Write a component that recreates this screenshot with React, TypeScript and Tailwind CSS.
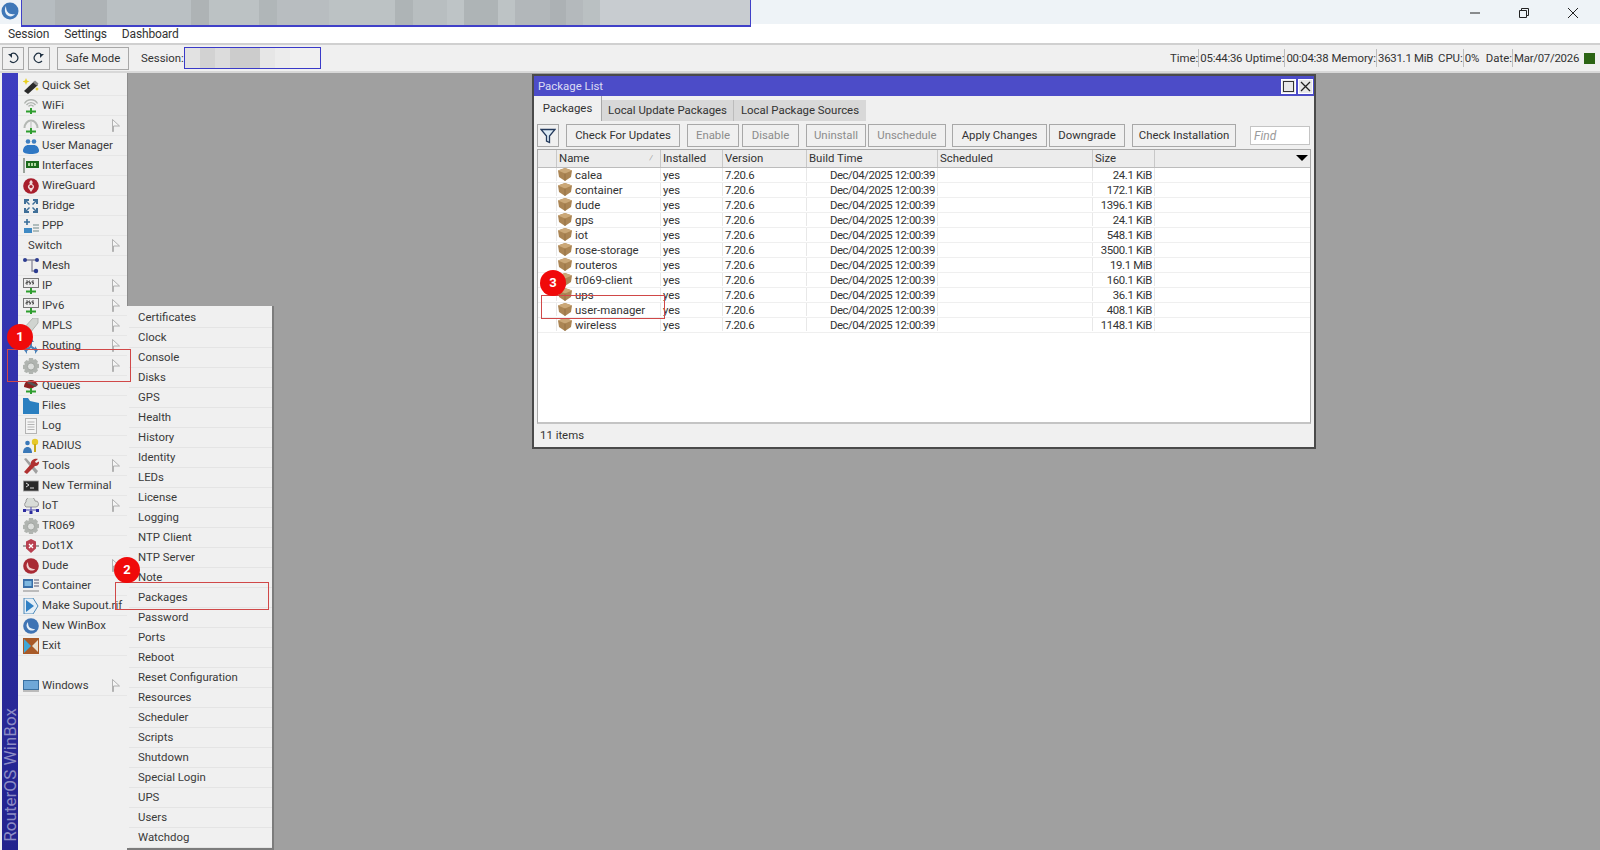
import React from 'react';

const Green = () => <path d="M8 10v6M3 13.500h10" stroke="#2e9e2e" strokeWidth="2" fill="none" />;

const icons: Record<string, React.ReactNode> = {
  quick: (
    <>
      <path d="M1 13L11 3.500 15 7 5 16z" fill="#2a2a2a" />
      <path d="M10 4.500l2-2 3.500 3-2 2z" fill="#8a8a8a" />
      <path d="M3 0l1 2.500 2.500 1-2.500 1-1 2.500-1-2.500-2.500-1 2.500-1zM14 9l.6 1.300 1.400.7-1.400.7-.6 1.300-.6-1.300-1.400-.7 1.400-.7z" fill="#e8d020" />
    </>
  ),
  wifi: (
    <>
      <path d="M1.500 5.500a7.500 7.500 0 0 1 13 0M3.500 7a5.500 5.500 0 0 1 9 0M5.500 8.500a3 3 0 0 1 5 0" stroke="#b0b4b0" strokeWidth="1.400" fill="none" />
      <Green />
    </>
  ),
  wireless: (
    <>
      <path d="M0.500 10a7.500 8.500 0 0 1 15 0h-2a5.500 6.500 0 0 0-11 0z" fill="#b4b8b4" />
      <path d="M8 4v8" stroke="#bbb" />
      <Green />
    </>
  ),
  users: (
    <>
      <circle cx="5" cy="3.500" r="2.300" fill="#3f7fc0" />
      <circle cx="11" cy="3.500" r="2.300" fill="#3f7fc0" />
      <path d="M0 13c0-4 3-6 5-6h6c2 0 5 2 5 6 0 2-3 3-8 3s-8-1-8-3z" fill="#2f78c4" />
    </>
  ),
  ifaces: (
    <>
      <rect x="0" y="0" width="2" height="15" fill="#9aa39a" />
      <rect x="3" y="3" width="13" height="7" fill="#1c6a1c" />
      <path d="M5 5h2v3H5zM8 5h2v3H8zM11 5h2v3h-2z" fill="#b0d8a0" />
    </>
  ),
  wg: (
    <>
      <circle cx="8" cy="8" r="7.800" fill="#a81e2c" />
      <path d="M8 2c2 1 2 3 1 4 2 1 3 3 1 5l-2 3-2-3c-2-2-1-4 1-5-1-1-1-2 1-4z" fill="#f0d8d8" />
      <circle cx="8" cy="8.500" r="1.600" fill="#a81e2c" />
    </>
  ),
  bridge: (
    <path d="M1 1h5v2H4l3 3-1 1-3-3v2H1zM15 1v5h-2V4l-3 3-1-1 3-3h-2V1zM1 15v-5h2v2l3-3 1 1-3 3h2v2zM15 15h-5v-2h2l-3-3 1-1 3 3v-2h2z" fill="#3f6f98" />
  ),
  ppp: (
    <>
      <path d="M4 1v6M1 4h6" stroke="#3a6f9a" strokeWidth="1.600" />
      <rect x="1" y="10" width="8" height="5" fill="#3f8ac4" />
      <path d="M10 7h6M10 10h6M10 13h6" stroke="#9aa" strokeWidth="1.300" />
    </>
  ),
  mesh: (
    <>
      <path d="M2 2h12M9 2v11h4" stroke="#889" strokeWidth="1.300" fill="none" />
      <circle cx="2" cy="2" r="2" fill="#2c3c90" />
      <circle cx="14" cy="2" r="2" fill="#2c3c90" />
      <circle cx="13" cy="13" r="2.200" fill="#2c3c90" />
    </>
  ),
  ip: (
    <>
      <rect x="0.500" y="0.500" width="15" height="9" fill="#eee" stroke="#777" />
      <path d="M3 3h2v1.500H3V6h2M7 3H6v1.500h1.500V6H6M11 3H9v1.500h1.500V6H9" stroke="#333" strokeWidth="0.800" fill="none" />
      <Green />
    </>
  ),
  mpls: <path d="M10 0h5v5L7 15l-6-5z" fill="#d0d4d0" stroke="#b0b4b0" />,
  routing: (
    <path d="M8 0l3 4H9v4l3 2V8l3 4-3 4v-3l-4-3-4 3v3l-3-4 3-4v2l3-2V4H5z" fill="#4a80b8" />
  ),
  gear: (
    <>
      <path d="M6 0h4l.5 2 2-1 2.500 2.500-1 2 2 .5v4l-2 .5 1 2-2.500 2.500-2-1-.5 2H6l-.5-2-2 1L1 13.500l1-2-2-.5V7l2-.5-1-2L3.500 2l2 1z" fill="#b0b4b0" />
      <circle cx="8" cy="8.500" r="3.600" fill="#dcdedc" stroke="#a0a4a0" />
    </>
  ),
  queues: (
    <>
      <path d="M1 9c0-4 3-7 7-7 3 0 6 2 7 5l-7 4z" fill="#8c2020" />
      <path d="M4 5l9 4 1-2-8-4z" fill="#555" />
      <Green />
    </>
  ),
  files: <path d="M0 0h5l2 3 9 2v11H0z" fill="#2a7fc0" />,
  log: (
    <>
      <rect x="2.500" y="0.500" width="11" height="15" fill="#f4f4f4" stroke="#b4b4b4" />
      <path d="M4.500 4h7M4.500 6.500h7M4.500 9h7M4.500 11.500h7" stroke="#b4b4b4" />
    </>
  ),
  radius: (
    <>
      <circle cx="4.500" cy="5" r="2.300" fill="#3a78b8" />
      <path d="M0 15c0-4 2-6 4.500-6S9 11 9 15z" fill="#3a78b8" />
      <circle cx="12" cy="4" r="3.200" fill="#e6c828" />
      <path d="M12 6v8" stroke="#c8a818" strokeWidth="2" />
    </>
  ),
  tools: (
    <>
      <path d="M1 1l2-1 12 13-2 3z" fill="#a0a0a0" />
      <path d="M15 1l-3 2.500 1 1.500 3-1.500c.5 3-2 5-4 4.500L4 16l-3-2 7-8c-1-3 3-6 7-5z" fill="#b03030" />
    </>
  ),
  term: (
    <>
      <rect x="0.500" y="3" width="15" height="10" fill="#2a2a2a" stroke="#999" strokeWidth="0.800" />
      <path d="M3 5l3 2-3 2M7 10h4" stroke="#ddd" fill="none" />
    </>
  ),
  iot: (
    <>
      <path d="M3 9a3 3 0 0 1 0-5 4.500 4.500 0 0 1 9-1 3 3 0 0 1 1 6z" fill="#d8dcd8" stroke="#999" />
      <path d="M8 9v5M2 12h12" stroke="#44a" />
      <rect x="0" y="11" width="3" height="3" fill="#2c2ca0" />
      <rect x="13" y="11" width="3" height="3" fill="#2c2ca0" />
      <rect x="6.500" y="13" width="3" height="3" fill="#2c2ca0" />
    </>
  ),
  dot1x: (
    <>
      <path d="M0 8h16" stroke="#888" strokeWidth="1.500" />
      <path d="M8 1l5 2.500v7L8 15l-5-4.500v-7z" fill="#b84050" />
      <path d="M6 6l4 4M10 6l-4 4" stroke="#fff" strokeWidth="1.300" />
    </>
  ),
  dude: (
    <>
      <circle cx="8" cy="8" r="7.800" fill="#a82a34" />
      <path d="M5 4c0 5 2 7 7 7-1 2-5 2-7 0S3 6 5 4z" fill="#f0d0d0" />
    </>
  ),
  container: (
    <>
      <rect x="0" y="1" width="10" height="9" fill="#3a6fa8" />
      <rect x="1.500" y="3" width="7" height="5" fill="#7fb8e0" />
      <path d="M11 2h5M11 5h5M11 8h5" stroke="#889" strokeWidth="1.500" />
      <path d="M0 13h16" stroke="#bbb" strokeWidth="2" />
    </>
  ),
  supout: (
    <>
      <path d="M1 0h9l5 8-5 8H1z" fill="#e4eef6" stroke="#4a88b8" />
      <path d="M3 2l8 6-8 6z" fill="#2f80c4" />
    </>
  ),
  winbox: (
    <>
      <circle cx="8" cy="8" r="7.800" fill="#3f74b4" />
      <path d="M5 4c0 5 2 7 7 7-1 2-5 2-7 0S3 6 5 4z" fill="#e8f0f8" />
    </>
  ),
  exit: (
    <>
      <rect x="0" y="0" width="16" height="16" fill="#a85a28" />
      <path d="M1 1l7 7-7 7z" fill="#40a8d8" />
      <path d="M15 2L9 8l6 6z" fill="#e8e0d0" />
    </>
  ),
  windows: (
    <>
      <rect x="0.500" y="2.500" width="15" height="9" fill="#6fa8d8" stroke="#3a70a0" />
      <path d="M0 13h16" stroke="#aaa" strokeWidth="1.500" />
    </>
  ),
};

const menu: { label: string; icon?: string; sub?: boolean }[] = [
  { label: 'Quick Set', icon: 'quick' },
  { label: 'WiFi', icon: 'wifi' },
  { label: 'Wireless', icon: 'wireless', sub: true },
  { label: 'User Manager', icon: 'users' },
  { label: 'Interfaces', icon: 'ifaces' },
  { label: 'WireGuard', icon: 'wg' },
  { label: 'Bridge', icon: 'bridge' },
  { label: 'PPP', icon: 'ppp' },
  { label: 'Switch', sub: true },
  { label: 'Mesh', icon: 'mesh' },
  { label: 'IP', icon: 'ip', sub: true },
  { label: 'IPv6', icon: 'ip', sub: true },
  { label: 'MPLS', icon: 'mpls', sub: true },
  { label: 'Routing', icon: 'routing', sub: true },
  { label: 'System', icon: 'gear', sub: true },
  { label: 'Queues', icon: 'queues' },
  { label: 'Files', icon: 'files' },
  { label: 'Log', icon: 'log' },
  { label: 'RADIUS', icon: 'radius' },
  { label: 'Tools', icon: 'tools', sub: true },
  { label: 'New Terminal', icon: 'term' },
  { label: 'IoT', icon: 'iot', sub: true },
  { label: 'TR069', icon: 'gear' },
  { label: 'Dot1X', icon: 'dot1x' },
  { label: 'Dude', icon: 'dude', sub: true },
  { label: 'Container', icon: 'container' },
  { label: 'Make Supout.rif', icon: 'supout' },
  { label: 'New WinBox', icon: 'winbox' },
  { label: 'Exit', icon: 'exit' },
];

const systemItems = [
  'Certificates', 'Clock', 'Console', 'Disks', 'GPS', 'Health', 'History', 'Identity', 'LEDs', 'License',
  'Logging', 'NTP Client', 'NTP Server', 'Note', 'Packages', 'Password', 'Ports', 'Reboot', 'Reset Configuration',
  'Resources', 'Scheduler', 'Scripts', 'Shutdown', 'Special Login', 'UPS', 'Users', 'Watchdog',
];

const packages = [
  ['calea', '24.1 KiB'],
  ['container', '172.1 KiB'],
  ['dude', '1396.1 KiB'],
  ['gps', '24.1 KiB'],
  ['iot', '548.1 KiB'],
  ['rose-storage', '3500.1 KiB'],
  ['routeros', '19.1 MiB'],
  ['tr069-client', '160.1 KiB'],
  ['ups', '36.1 KiB'],
  ['user-manager', '408.1 KiB'],
  ['wireless', '1148.1 KiB'],
];

// pixelated strip over the address in the title bar: [width, colour]
const blurTitle: [number, string][] = [
  [33, '#b6bcc0'], [52, '#aeb3b6'], [84, '#bac0c3'], [18, '#aeb3b5'], [50, '#bcc2c4'], [18, '#b0b6b8'], [52, '#b8bdc0'],
  [67, '#bcc2c4'], [18, '#aeb4b6'], [34, '#b8bec0'], [17, '#bec4c6'], [34, '#aeb4b6'], [17, '#bdc3c5'], [35, '#b2b7ba'],
  [16, '#acb1b4'], [17, '#b4b9bc'], [17, '#bac0c2'], [150, '#c8ccd0'],
];
const blurSession = ['#e2e2e2', '#d2d2d2', '#dcdcdc', '#cccccc', '#cccccc', '#e6e6e6', '#ececec', '#f0f0f0', '#f0f0f0'];

function Arrow() {
  return (
    <svg width="8" height="13" viewBox="0 0 8 13" className="absolute left-[94px] top-[3px]">
      <path d="M0.500 0.500L7.500 7L1.500 7L1.500 12.500L0.500 12.500Z" fill="#f4f4f4" stroke="#a0a0a0" strokeWidth="0.800" />
    </svg>
  );
}

function Icon({ name }: { name: string }) {
  return (
    <svg width="16" height="16" viewBox="0 0 16 16" className="absolute left-[5px] top-[2px]">
      {icons[name]}
    </svg>
  );
}

function MenuRow({ label, icon, sub }: { label: string; icon?: string; sub?: boolean }) {
  return (
    <div className={`relative flex h-[20px] items-center border-b border-[#e6e6e6] pb-[2px] text-[#3a3a3a] ${icon ? 'pl-[24px]' : 'pl-[10px]'}`}>
      {icon && <Icon name={icon} />}
      <span className="whitespace-nowrap">{label}</span>
      {sub && <Arrow />}
    </div>
  );
}

function Sidebar() {
  return (
    <div className="flex w-[127px] shrink-0 bg-[#f0f0f0] pl-[2px]">
      <div className="flex w-[16px] flex-col justify-end bg-gradient-to-b from-[#3c3cc0] to-[#23238e] pb-[8px]">
        <span className="rotate-180 text-[17.100px] leading-[16px] text-[#8c8cc4] [writing-mode:vertical-rl]">RouterOS WinBox</span>
      </div>
      <div className="flex flex-1 flex-col pt-[3px]">
        {menu.map((m) => (
          <MenuRow key={m.label} {...m} />
        ))}
        <div className="h-[20px]" />
        <MenuRow label="Windows" icon="windows" sub />
      </div>
    </div>
  );
}

function SystemMenu() {
  return (
    <div className="absolute left-[127px] top-[234px] w-[147px] border-r-2 border-b-2 border-[#7c7c7c] bg-[#f0f0f0] pt-[2px] pl-[2px]">
      {systemItems.map((s) => (
        <div key={s} className="flex h-[20px] items-center border-b border-[#e4e4e4] pb-[1px] pl-[9px] text-[#3a3a3a]">
          {s}
        </div>
      ))}
    </div>
  );
}

function Btn({ label, w, off }: { label: string; w: string; off?: boolean }) {
  return (
    <div className={`flex h-[23px] items-center justify-center border border-[#a8a8a8] bg-[#f0f0f0] pb-[1px] ${w} ${off ? 'text-[#8c8c8c]' : 'text-[#333]'}`}>
      {label}
    </div>
  );
}

function Box() {
  return (
    <svg width="14" height="13" viewBox="0 0 14 13" className="shrink-0">
      <path d="M0 2.500l7-2.500 7 2.500-1 6.500-6 4-6-4z" fill="#ab8554" />
      <path d="M0 2.500l7 3 7-3-7-2.500z" fill="#cba878" />
      <path d="M7 5.500v7.500" stroke="#87663a" strokeWidth="0.600" />
    </svg>
  );
}

const cols = ['w-[19px]', 'w-[104px]', 'w-[62px]', 'w-[84px]', 'w-[131px]', 'w-[155px]', 'w-[62px]'];

function PackageWindow() {
  return (
    <div className="absolute left-[532px] top-[2px] flex h-[375px] w-[784px] flex-col border-2 border-[#4a4a4a] bg-[#f0f0f0]">
      <div className="flex h-[20px] shrink-0 items-center justify-between bg-[#4c4cc8] pl-[4px] pr-[1px] text-[#dcdcf4]">
        <span>Package List</span>
        <div className="flex gap-[2px]">
          <div className="flex h-[15px] w-[15px] items-center justify-center border border-white bg-[#e8e8e8]">
            <div className="h-[11px] w-[11px] border border-[#333]" />
          </div>
          <div className="flex h-[15px] w-[15px] items-center justify-center border border-white bg-[#e8e8e8] text-[#222]">
            <svg width="11" height="11" viewBox="0 0 11 11"><path d="M1 1l9 9M10 1l-9 9" stroke="#222" strokeWidth="1.300" /></svg>
          </div>
        </div>
      </div>
      <div className="flex h-[25px] shrink-0 items-end">
        <div className="flex h-[25px] w-[68px] items-center justify-center border-r border-[#a8a8a8] pb-[2px] text-[#333]">Packages</div>
        <div className="flex h-[21px] w-[132px] items-center justify-center border-r border-[#bcbcbc] bg-[#d8d8d8] pb-[1px] text-[#333]">Local Update Packages</div>
        <div className="flex h-[21px] w-[132px] items-center justify-center bg-[#d8d8d8] pb-[1px] text-[#333]">Local Package Sources</div>
      </div>
      <div className="flex h-[28px] shrink-0 items-center pl-[3px] pt-[1px]">
        <div className="flex h-[23px] w-[22px] items-center justify-center border border-[#a8a8a8]">
          <svg width="16" height="16" viewBox="0 0 16 16"><path d="M1 1.500h14L9.500 8v6.500l-3-1.500V8z" fill="#dceaf4" stroke="#243a5c" strokeWidth="1.300" /></svg>
        </div>
        <div className="ml-[7px]"><Btn label="Check For Updates" w="w-[114px]" /></div>
        <div className="ml-[7px]"><Btn label="Enable" w="w-[52px]" off /></div>
        <div className="ml-[3px]"><Btn label="Disable" w="w-[57px]" off /></div>
        <div className="ml-[7px]"><Btn label="Uninstall" w="w-[60px]" off /></div>
        <div className="ml-[2px]"><Btn label="Unschedule" w="w-[78px]" off /></div>
        <div className="ml-[6px]"><Btn label="Apply Changes" w="w-[95px]" /></div>
        <div className="ml-[2px]"><Btn label="Downgrade" w="w-[76px]" /></div>
        <div className="ml-[7px]"><Btn label="Check Installation" w="w-[104px]" /></div>
        <div className="ml-[14px] flex h-[19px] w-[60px] items-center border border-[#c4c4c4] bg-white pl-[3px] text-[12px] italic text-[#9a9a9a]">Find</div>
      </div>
      <div className="mx-[3px] flex flex-1 flex-col border border-[#a8a8a8] border-b-2 border-b-[#c4c4c4] bg-white">
        <div className="flex h-[18px] shrink-0 items-center border-b border-[#bcbcbc] bg-[#ececec] text-[#333]">
          <div className={`${cols[0]} h-full border-r border-[#c8c8c8]`} />
          <div className={`${cols[1]} relative h-full border-r border-[#c8c8c8] pl-[2px]`}>
            Name
            <span className="absolute right-[7px] top-0 text-[9px] text-[#999]">⁄</span>
          </div>
          <div className={`${cols[2]} h-full border-r border-[#c8c8c8] pl-[2px]`}>Installed</div>
          <div className={`${cols[3]} h-full border-r border-[#c8c8c8] pl-[2px]`}>Version</div>
          <div className={`${cols[4]} h-full border-r border-[#c8c8c8] pl-[2px]`}>Build Time</div>
          <div className={`${cols[5]} h-full border-r border-[#c8c8c8] pl-[2px]`}>Scheduled</div>
          <div className={`${cols[6]} h-full border-r border-[#c8c8c8] pl-[2px]`}>Size</div>
          <div className="relative h-full flex-1">
            <span className="absolute right-[2px] top-[5px] h-0 w-0 border-x-[6px] border-t-[6px] border-x-transparent border-t-black" />
          </div>
        </div>
        <div className="flex-1">
          {packages.map(([name, size]) => (
            <div key={name} className="flex h-[15px] border-b border-[#efefef] pb-[1px] text-[#333]">
              <div className={`${cols[0]} border-r border-[#e8e8e8]`} />
              <div className={`${cols[1]} flex items-center gap-[3px] border-r border-[#e8e8e8] pl-[1px]`}>
                <Box />
                {name}
              </div>
              <div className={`${cols[2]} flex items-center border-r border-[#e8e8e8] pl-[2px]`}>yes</div>
              <div className={`${cols[3]} flex items-center border-r border-[#e8e8e8] pl-[2px] tracking-[-0.4px]`}>7.20.6</div>
              <div className={`${cols[4]} flex items-center justify-end border-r border-[#e8e8e8] pr-[2px] tracking-[-0.45px]`}>Dec/04/2025 12:00:39</div>
              <div className={`${cols[5]} border-r border-[#e8e8e8]`} />
              <div className={`${cols[6]} flex items-center justify-end border-r border-[#e8e8e8] pr-[2px] tracking-[-0.35px]`}>{size}</div>
              <div className="flex-1" />
            </div>
          ))}
        </div>
      </div>
      <div className="mx-[3px] flex h-[21px] shrink-0 items-center pl-[3px] text-[#333]">11 items</div>
      <div className="h-[2px] shrink-0" />
    </div>
  );
}

function Stat({ label, value, w }: { label: string; value: string; w: string }) {
  return (
    <div className="flex items-center whitespace-nowrap">
      <span>{label}:</span>
      <span className={`flex h-[18px] items-center border-l border-[#bdbdbd] pl-[1px] tracking-[-0.25px] ${w}`}>{value}</span>
    </div>
  );
}

function Annotation({ n, cx, cy }: { n: number; cx: string; cy: string }) {
  return (
    <div className={`absolute flex h-[26px] w-[26px] items-center justify-center rounded-full bg-[#f00a0a] text-[13px] font-bold text-white ${cx} ${cy}`}>
      {n}
    </div>
  );
}

export default function App() {
  return (
    <div className="relative flex h-[850px] w-[1600px] flex-col overflow-hidden bg-white font-['Roboto','Liberation_Sans',sans-serif] text-[11.400px] leading-[16px]">
      {/* title bar */}
      <div className="flex h-[24px] shrink-0 bg-[#eef3f7]">
        <svg width="18" height="18" viewBox="0 0 18 18" className="ml-[1px] mt-[2px] shrink-0">
          <circle cx="9" cy="9" r="8.500" fill="#3f78b8" />
          <path d="M5 4c0 6 3 9 9 8-2 3-6 3-8 1S3 7 5 4z" fill="#e8f0f8" />
        </svg>
        <div className="ml-[2px] flex h-[27px] w-[730px] shrink-0 border-x border-b-2 border-[#4040c8]">
          {blurTitle.map(([n, c], i) => (
            <div key={i} style={{ flexGrow: n, background: c }} />
          ))}
        </div>
        <div className="ml-auto flex items-center gap-[37px] pr-[21px] pt-[1px]">
          <svg width="12" height="12" viewBox="0 0 12 12"><path d="M1 6h10" stroke="#222" /></svg>
          <svg width="12" height="12" viewBox="0 0 12 12"><path d="M1.500 3.500h7v7h-7zM3.500 3.500v-2h7v7h-2" stroke="#222" fill="none" /></svg>
          <svg width="12" height="12" viewBox="0 0 12 12"><path d="M1 1l10 10M11 1L1 11" stroke="#222" /></svg>
        </div>
      </div>
      {/* menu bar */}
      <div className="flex h-[21px] shrink-0 items-end gap-[15px] border-b-2 border-[#d0d0d0] pb-[1px] pl-[8px] text-[12px] tracking-[-0.15px] text-[#333]">
        <span>Session</span>
        <span>Settings</span>
        <span>Dashboard</span>
      </div>
      {/* toolbar */}
      <div className="flex h-[28px] shrink-0 items-center border-b-2 border-[#d8d8d8] bg-[#f0f0f0] pl-[2px] text-[#333]">
        <div className="flex h-[23px] w-[22px] items-center justify-center border border-[#a8a8a8]">
          <svg width="12" height="12" viewBox="0 0 12 12"><path d="M4 2a4.500 4.500 0 1 1-1 7" stroke="#234" strokeWidth="1.200" fill="none" /><path d="M1 2h4v4z" fill="#234" /></svg>
        </div>
        <div className="ml-[4px] flex h-[23px] w-[22px] items-center justify-center border border-[#a8a8a8]">
          <svg width="12" height="12" viewBox="0 0 12 12"><path d="M8 2a4.500 4.500 0 1 0 1 7" stroke="#234" strokeWidth="1.200" fill="none" /><path d="M11 2H7v4z" fill="#234" /></svg>
        </div>
        <div className="ml-[7px] flex h-[23px] w-[72px] items-center justify-center border border-[#a8a8a8]">Safe Mode</div>
        <span className="ml-[12px] w-[42px]">Session:</span>
        <div className="ml-[1px] flex h-[22px] w-[137px] border border-[#3a3ac8]">
          {blurSession.map((c, i) => (
            <div key={i} className="flex-1" style={{ background: c }} />
          ))}
        </div>
        <div className="ml-auto flex items-center gap-[5px] pr-[5px]">
          <Stat label="Time" value="05:44:36" w="w-[42px]" />
          <Stat label="Uptime" value="00:04:38" w="w-[42px]" />
          <Stat label="Memory" value="3631.1 MiB" w="w-[57px]" />
          <Stat label="CPU" value="0%" w="w-[18px]" />
          <Stat label="Date" value="Mar/07/2026" w="w-[64px]" />
          <div className="ml-[3px] h-[11px] w-[11px] bg-[#2c6414]" />
        </div>
      </div>
      {/* body */}
      <div className="flex flex-1">
        <Sidebar />
        <div className="relative flex-1 border-l border-[#8c8c8c] bg-[#a0a0a0]" />
      </div>
      <div className="absolute left-0 top-[72px] h-[778px] w-[1600px]">
        <SystemMenu />
        <PackageWindow />
      </div>
      {/* annotation marks */}
      <div className="absolute left-[7px] top-[349px] h-[33px] w-[124px] border border-[#d04848]" />
      <div className="absolute left-[115px] top-[582px] h-[28px] w-[154px] border border-[#d04848]" />
      <div className="absolute left-[541px] top-[295px] h-[24px] w-[124px] border border-[#d04848]" />
      <Annotation n={1} cx="left-[7px]" cy="top-[324px]" />
      <Annotation n={2} cx="left-[114px]" cy="top-[557px]" />
      <Annotation n={3} cx="left-[540px]" cy="top-[270px]" />
    </div>
  );
}
